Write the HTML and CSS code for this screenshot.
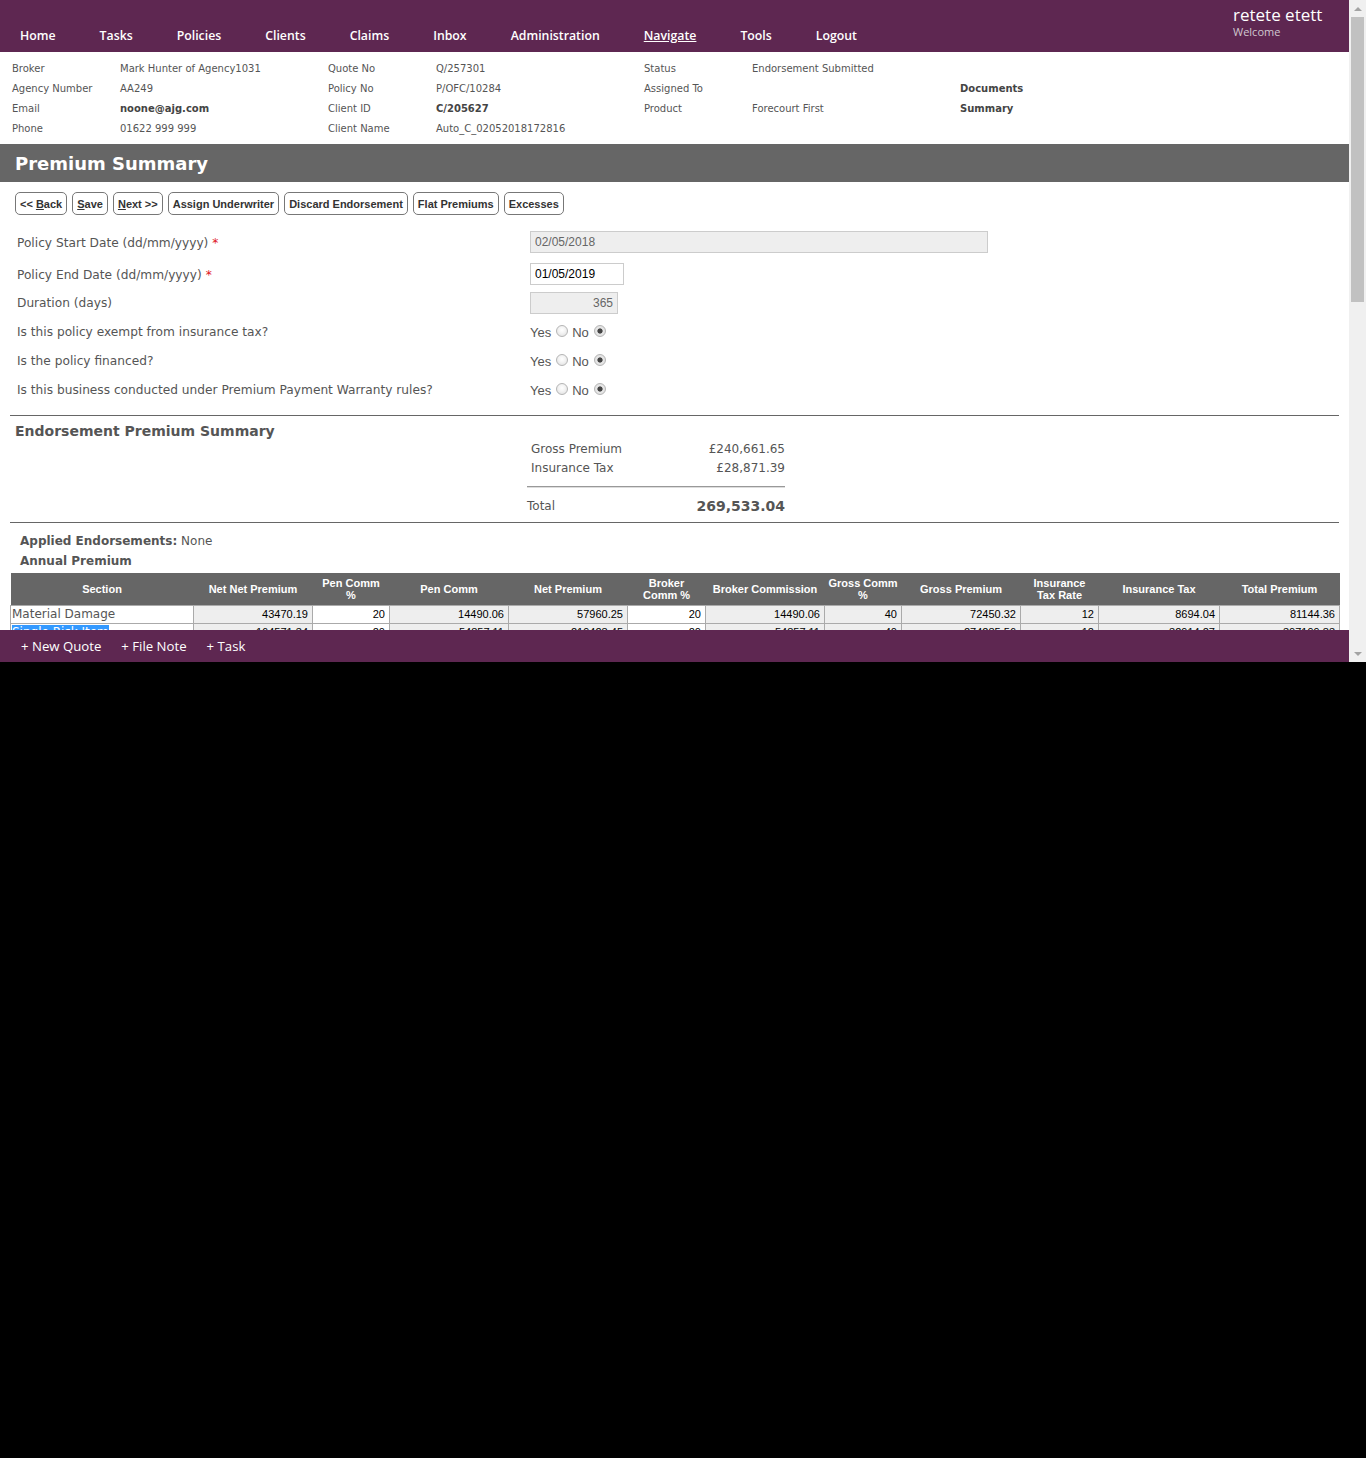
FILE: index.html
```html
<!DOCTYPE html>
<html lang="en">
<head>
<meta charset="utf-8">
<title>Premium Summary</title>
<link rel="stylesheet" href="styles.css">
</head>
<body>
<div class="screen">
  <div class="page">
    <div class="scroll-area">
      <header class="topnav">
        <nav class="nav">
          <a href="#">Home</a>
          <a href="#">Tasks</a>
          <a href="#">Policies</a>
          <a href="#">Clients</a>
          <a href="#">Claims</a>
          <a href="#">Inbox</a>
          <a href="#">Administration</a>
          <a href="#" class="current">Navigate</a>
          <a href="#">Tools</a>
          <a href="#">Logout</a>
        </nav>
        <div class="user">
          <div class="user-name">retete etett</div>
          <div class="user-welcome">Welcome</div>
        </div>
      </header>

      <section class="info">
        <span>Broker</span><span>Mark Hunter of Agency1031</span><span>Quote No</span><span>Q/257301</span><span>Status</span><span>Endorsement Submitted</span><span></span>
        <span>Agency Number</span><span>AA249</span><span>Policy No</span><span>P/OFC/10284</span><span>Assigned To</span><span></span><span class="strong">Documents</span>
        <span>Email</span><span class="strong">noone@ajg.com</span><span>Client ID</span><span class="strong">C/205627</span><span>Product</span><span>Forecourt First</span><span class="strong">Summary</span>
        <span>Phone</span><span>01622 999 999</span><span>Client Name</span><span>Auto_C_02052018172816</span><span></span><span></span><span></span>
      </section>

      <h1 class="titlebar">Premium Summary</h1>

      <main class="content">
        <div class="toolbar">
          <button class="btn">&lt;&lt; <u>B</u>ack</button>
          <button class="btn"><u>S</u>ave</button>
          <button class="btn"><u>N</u>ext &gt;&gt;</button>
          <button class="btn">Assign Underwriter</button>
          <button class="btn">Discard Endorsement</button>
          <button class="btn">Flat Premiums</button>
          <button class="btn">Excesses</button>
        </div>

        <div class="form">
          <div class="row row-1">
            <label class="row-label">Policy Start Date (dd/mm/yyyy) <span class="req">*</span></label>
            <input class="field field-readonly field-wide" type="text" value="02/05/2018" readonly>
          </div>
          <div class="row row-2">
            <label class="row-label">Policy End Date (dd/mm/yyyy) <span class="req">*</span></label>
            <input class="field field-date" type="text" value="01/05/2019">
          </div>
          <div class="row row-3">
            <label class="row-label">Duration (days)</label>
            <input class="field field-readonly field-num" type="text" value="365" readonly>
          </div>
          <div class="row">
            <label class="row-label">Is this policy exempt from insurance tax?</label>
            <div class="yesno">
              <span>Yes</span><input type="radio" name="q1" class="radio">
              <span>No</span><input type="radio" name="q1" class="radio" checked>
            </div>
          </div>
          <div class="row">
            <label class="row-label">Is the policy financed?</label>
            <div class="yesno">
              <span>Yes</span><input type="radio" name="q2" class="radio">
              <span>No</span><input type="radio" name="q2" class="radio" checked>
            </div>
          </div>
          <div class="row">
            <label class="row-label">Is this business conducted under Premium Payment Warranty rules?</label>
            <div class="yesno">
              <span>Yes</span><input type="radio" name="q3" class="radio">
              <span>No</span><input type="radio" name="q3" class="radio" checked>
            </div>
          </div>
        </div>

        <div class="divider divider-first"></div>

        <section class="endorse">
          <h2 class="endorse-title">Endorsement Premium Summary</h2>
          <div class="totals">
            <div class="totals-row"><span>Gross Premium</span><span>£240,661.65</span></div>
            <div class="totals-row"><span>Insurance Tax</span><span>£28,871.39</span></div>
            <div class="totals-line"></div>
            <div class="totals-total"><span>Total</span><span class="grand">269,533.04</span></div>
          </div>
        </section>

        <div class="divider divider-second"></div>

        <p class="applied"><b>Applied Endorsements:</b> None</p>
        <p class="annual">Annual Premium</p>

        <table class="premiums">
          <colgroup>
            <col style="width:183px"><col style="width:119px"><col style="width:77px"><col style="width:119px">
            <col style="width:119px"><col style="width:78px"><col style="width:119px"><col style="width:77px">
            <col style="width:119px"><col style="width:78px"><col style="width:121px"><col style="width:120px">
          </colgroup>
          <thead>
            <tr>
              <th>Section</th>
              <th>Net Net Premium</th>
              <th>Pen Comm<br>%</th>
              <th>Pen Comm</th>
              <th>Net Premium</th>
              <th>Broker<br>Comm %</th>
              <th>Broker Commission</th>
              <th>Gross Comm<br>%</th>
              <th>Gross Premium</th>
              <th>Insurance<br>Tax Rate</th>
              <th>Insurance Tax</th>
              <th>Total Premium</th>
            </tr>
          </thead>
          <tbody>
            <tr>
              <td class="sec">Material Damage</td>
              <td class="ro">43470.19</td>
              <td>20</td>
              <td class="ro">14490.06</td>
              <td class="ro">57960.25</td>
              <td>20</td>
              <td class="ro">14490.06</td>
              <td class="ro">40</td>
              <td class="ro">72450.32</td>
              <td class="ro">12</td>
              <td class="ro">8694.04</td>
              <td class="ro">81144.36</td>
            </tr>
            <tr>
              <td class="sec"><span class="selected">Single Risk Item</span></td>
              <td class="ro">164571.34</td>
              <td>20</td>
              <td class="ro">54857.11</td>
              <td class="ro">219428.45</td>
              <td>20</td>
              <td class="ro">54857.11</td>
              <td class="ro">40</td>
              <td class="ro">274285.56</td>
              <td class="ro">12</td>
              <td class="ro">32914.27</td>
              <td class="ro">307199.83</td>
            </tr>
          </tbody>
        </table>
      </main>
    </div>

    <footer class="actionbar">
      <a href="#">+ New Quote</a>
      <a href="#">+ File Note</a>
      <a href="#">+ Task</a>
    </footer>
  </div>

  <div class="scrollbar">
    <div class="sb-btn"><span class="arrow-up"></span></div>
    <div class="sb-thumb"></div>
    <div class="sb-track"></div>
    <div class="sb-btn"><span class="arrow-down"></span></div>
  </div>
</div>
</body>
</html>
```

FILE: styles.css
```css
* { box-sizing: border-box; }

body {
  margin: 0;
  background: #000;
}

.screen {
  display: flex;
  width: 1366px;
  height: 662px;
  overflow: hidden;
}

.page {
  flex: 1;
  min-width: 0;
  display: flex;
  flex-direction: column;
  background: #fff;
  font-family: "DejaVu Sans", Verdana, sans-serif;
  color: #555;
}

.scroll-area {
  flex: 1;
  min-height: 0;
  overflow: hidden;
}

/* ---------- top navigation ---------- */
.topnav {
  display: flex;
  height: 52px;
  background: #5e2751;
}

.nav {
  display: flex;
  align-items: flex-end;
  gap: 44px;
  padding: 0 0 8px 20px;
}

.nav a {
  color: #fff;
  text-decoration: none;
  font: 600 12.3px/17px "Open Sans", sans-serif;
}

.nav a.current { text-decoration: underline; }

.user {
  margin-left: auto;
  width: 116px;
  padding-top: 5px;
  font-family: "Open Sans", sans-serif;
}

.user-name {
  color: #fff;
  font-size: 17px;
  line-height: 19px;
}

.user-welcome {
  color: #d0c8d0;
  font-size: 11px;
  line-height: 15px;
}

/* ---------- info grid ---------- */
.info {
  display: grid;
  grid-template-columns: 108px 208px 108px 208px 108px 208px auto;
  grid-auto-rows: 20px;
  padding: 7px 12px 5px;
  font-size: 10px;
  line-height: 20px;
  color: #555;
}

.info .strong {
  font-weight: bold;
  color: #444;
}

/* ---------- title ---------- */
.titlebar {
  margin: 0;
  height: 38px;
  padding: 1px 0 0 15px;
  background: #666;
  color: #fff;
  font: bold 18px/37px "DejaVu Sans", sans-serif;
}

/* ---------- content ---------- */
.content {
  padding: 10px 10px 0;
}

.toolbar {
  display: flex;
  gap: 5px;
  margin-left: 5px;
}

.btn {
  height: 23px;
  padding: 0 4px;
  border: 1px solid #777;
  border-radius: 5px;
  background: #fff;
  color: #333;
  font: bold 11px "Liberation Sans", Arial, sans-serif;
}

.form {
  margin-top: 13px;
}

.row {
  display: flex;
  align-items: center;
  height: 29px;
  padding-left: 7px;
}

.row-1 { height: 30px; }
.row-2 { height: 31px; padding-top: 2px; }
.row-3 { height: 28px; }

.row-label {
  width: 513px;
  flex: none;
  font-size: 12.2px;
  color: #555;
}

.req { color: #e0141e; }

.field {
  height: 22px;
  padding: 0 4px;
  border: 1px solid #ccc;
  font: 12px "Liberation Sans", Arial, sans-serif;
  color: #000;
  background: #fff;
  outline: none;
}

.field-readonly {
  background: #eee;
  color: #666;
}

.field-wide { width: 458px; margin-top: -2px; }
.field-date { width: 94px; margin-top: -2px; }
.field-num { width: 88px; text-align: right; }

.yesno {
  display: flex;
  align-items: center;
  font: 13px "Liberation Sans", Arial, sans-serif;
  color: #555;
  padding-top: 2px;
}

.radio {
  appearance: none;
  -webkit-appearance: none;
  width: 12px;
  height: 12px;
  margin: 0 4px 3px 5px;
  border: 1px solid #b5b5b5;
  border-radius: 50%;
  background: radial-gradient(circle at 50% 40%, #fff 0, #f4f4f4 40%, #dcdcdc 100%);
}

.radio:checked {
  background: radial-gradient(circle, #444 0, #444 2.2px, #e8e8e8 3px, #dcdcdc 100%);
}

.divider {
  border-top: 1px solid #666;
}

.divider-first { margin-top: 11px; }

.endorse-title {
  margin: 6px 0 0;
  padding-left: 5px;
  font: bold 14px/18px "DejaVu Sans", sans-serif;
  color: #555;
}

.totals {
  width: 258px;
  margin-left: 517px;
  font-size: 12px;
  color: #555;
}

.totals-row {
  display: flex;
  justify-content: space-between;
  padding-left: 4px;
  line-height: 19px;
}

.totals-line {
  margin-top: 8px;
  height: 2px;
  border-top: 1px solid #999;
  border-bottom: 1px solid #ddd;
}

.totals-total {
  display: flex;
  justify-content: space-between;
  align-items: center;
  height: 22px;
  margin-top: 7px;
}

.grand {
  font-weight: bold;
  font-size: 14px;
}

.divider-second { margin-top: 5px; }

.applied, .annual {
  margin: 0;
  padding-left: 10px;
  font-size: 12px;
  line-height: 20px;
  color: #555;
}

.applied { margin-top: 8px; }
.applied b, .annual { font-weight: bold; }

/* ---------- premiums table ---------- */
.premiums {
  margin-top: 2px;
  width: 1329px;
  table-layout: fixed;
  border-collapse: collapse;
  font: 11px "Liberation Sans", Arial, sans-serif;
}

.premiums th {
  height: 32px;
  padding: 0 2px;
  background: #666;
  color: #fff;
  font-weight: bold;
  line-height: 12px;
  text-align: center;
}

.premiums td {
  height: 18px;
  padding: 0 4px;
  border: 1px solid #aaa;
  text-align: right;
  color: #000;
  background: #fff;
  line-height: 16px;
}

.premiums td.ro { background: #eee; }

.premiums td.sec {
  text-align: left;
  padding-left: 1px;
  font: 12px "DejaVu Sans", sans-serif;
  color: #555;
}

.selected {
  background: #3399ff;
  color: #fff;
}

/* ---------- bottom action bar ---------- */
.actionbar {
  flex: none;
  height: 32px;
  display: flex;
  align-items: center;
  gap: 20px;
  padding-left: 21px;
  background: #5e2751;
}

.actionbar a {
  color: #fff;
  text-decoration: none;
  font: 13.2px "Open Sans", sans-serif;
}

/* ---------- scrollbar ---------- */
.scrollbar {
  width: 17px;
  flex: none;
  display: flex;
  flex-direction: column;
  background: #f0f0f0;
}

.sb-btn {
  height: 17px;
  display: flex;
  align-items: center;
  justify-content: center;
}

.arrow-up {
  border-left: 4px solid transparent;
  border-right: 4px solid transparent;
  border-bottom: 4px solid #a3a3a3;
}

.arrow-down {
  border-left: 4px solid transparent;
  border-right: 4px solid transparent;
  border-top: 4px solid #a3a3a3;
}

.sb-thumb {
  height: 285px;
  margin: 0 2px;
  background: #c1c1c1;
}

.sb-track { flex: 1; }
```
